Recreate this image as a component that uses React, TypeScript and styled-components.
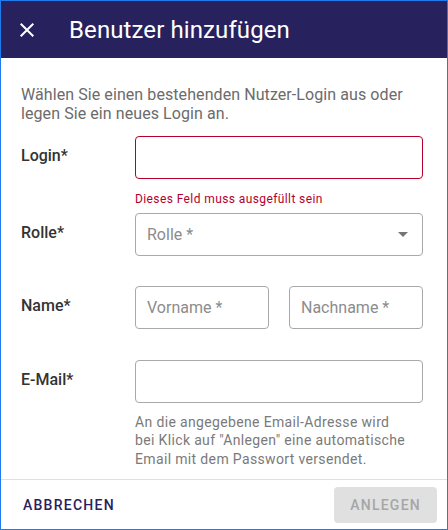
import React from "react";
import styled, { createGlobalStyle } from "styled-components";

const GlobalStyle = createGlobalStyle`
  html, body { margin: 0; padding: 0; background: #fff; }
  body { font-family: Roboto, "Noto Sans", "Liberation Sans", sans-serif; }
  * { box-sizing: border-box; }
`;

const Dialog = styled.div`
  width: 448px;
  height: 530px;
  border: 1px solid #1f7bf0;
  display: flex;
  flex-direction: column;
  background: #fff;
  overflow: hidden;
`;

const Header = styled.header`
  height: 57px;
  flex: none;
  background: #27225d;
  display: flex;
  align-items: center;
  padding-left: 14px;
  gap: 30px;
  color: #fff;
`;

const CloseButton = styled.button`
  width: 24px;
  height: 24px;
  padding: 0;
  border: 0;
  background: transparent;
  color: #fff;
  display: flex;
  cursor: pointer;
`;

const Title = styled.h1`
  margin: 0;
  font-size: 24px;
  font-weight: 400;
  line-height: 30px;
  letter-spacing: 0.1px;
`;

const Body = styled.main`
  flex: 1;
  padding: 27px 24px 0 20px;
  display: flex;
  flex-direction: column;
`;

const Intro = styled.p`
  margin: 0 0 12px;
  font-size: 16px;
  line-height: 19.3px;
  letter-spacing: 0.08px;
  color: #6b6b6b;
`;

const Row = styled.div<{ $gap: number }>`
  display: grid;
  grid-template-columns: 114px minmax(0, 1fr);
  margin-top: ${(p) => p.$gap}px;
`;

const Label = styled.label`
  height: 43px;
  display: flex;
  align-items: center;
  padding-bottom: 3px;
  font-size: 16px;
  font-weight: 500;
  color: #333;
`;

const Field = styled.div`
  display: flex;
  flex-direction: column;
  min-width: 0;
`;

const Pair = styled.div`
  display: grid;
  grid-template-columns: minmax(0, 1fr) minmax(0, 1fr);
  gap: 20px;
`;

const Box = styled.div<{ $error?: boolean }>`
  position: relative;
  height: 43px;
  min-width: 0;
  border: 1px solid ${(p) => (p.$error ? "#b5002c" : "#a9a9a9")};
  border-radius: 4px;
  display: flex;
  align-items: center;
  padding: 0 11px;
`;

const Input = styled.input`
  flex: 1;
  width: 100%;
  min-width: 0;
  border: 0;
  outline: none;
  background: transparent;
  padding: 0;
  font-family: inherit;
  font-size: 16px;
  color: #333;
  &::placeholder { color: #8c8c8c; opacity: 1; }
`;

const Placeholder = styled.span`
  flex: 1;
  font-size: 16px;
  color: #8c8c8c;
`;

const Arrow = styled.svg`
  width: 24px;
  height: 24px;
  margin-right: -4px;
  fill: #757575;
`;

const ErrorText = styled.div`
  margin-top: 10px;
  font-size: 12px;
  line-height: 20px;
  letter-spacing: 0.4px;
  color: #b5002c;
`;

const Helper = styled.div`
  margin-top: 10px;
  font-size: 14px;
  line-height: 18.5px;
  letter-spacing: 0.35px;
  color: #7a7a7a;
`;

const Footer = styled.footer`
  height: 50px;
  flex: none;
  border-top: 1px solid #e0e0e0;
  display: flex;
  align-items: center;
  justify-content: space-between;
  padding: 0 10px 0 14px;
`;

const TextButton = styled.button`
  height: 36px;
  padding: 0 8px;
  border: 0;
  background: transparent;
  font-family: inherit;
  font-size: 14px;
  font-weight: 500;
  letter-spacing: 1.25px;
  text-transform: uppercase;
  color: #27225d;
  cursor: pointer;
`;

const ContainedButton = styled.button`
  height: 36px;
  padding: 0 16px;
  border: 0;
  border-radius: 4px;
  background: #e0e0e0;
  font-family: inherit;
  font-size: 14px;
  font-weight: 500;
  letter-spacing: 1.25px;
  text-transform: uppercase;
  color: #a6a6a6;
`;

export default function App() {
  return (
    <>
      <GlobalStyle />
      <Dialog>
        <Header>
          <CloseButton aria-label="Schließen">
            <svg width="24" height="24" viewBox="0 0 24 24" fill="currentColor">
              <path d="M19 6.41L17.59 5 12 10.59 6.41 5 5 6.41 10.59 12 5 17.59 6.41 19 12 13.41 17.59 19 19 17.59 13.41 12z" />
            </svg>
          </CloseButton>
          <Title>Benutzer hinzufügen</Title>
        </Header>
        <Body>
          <Intro>
            Wählen Sie einen bestehenden Nutzer-Login aus oder legen Sie ein neues Login an.
          </Intro>
          <Row $gap={0}>
            <Label>Login*</Label>
            <Field>
              <Box $error>
                <Input />
              </Box>
              <ErrorText>Dieses Feld muss ausgefüllt sein</ErrorText>
            </Field>
          </Row>
          <Row $gap={4}>
            <Label>Rolle*</Label>
            <Field>
              <Box>
                <Placeholder>Rolle *</Placeholder>
                <Arrow viewBox="0 0 24 24">
                  <path d="M7 10l5 5 5-5z" />
                </Arrow>
              </Box>
            </Field>
          </Row>
          <Row $gap={30}>
            <Label>Name*</Label>
            <Pair>
              <Box>
                <Input placeholder="Vorname *" />
              </Box>
              <Box>
                <Input placeholder="Nachname *" />
              </Box>
            </Pair>
          </Row>
          <Row $gap={31}>
            <Label>E-Mail*</Label>
            <Field>
              <Box>
                <Input />
              </Box>
              <Helper>
                An die angegebene Email-Adresse wird
                <br />
                bei Klick auf "Anlegen" eine automatische
                <br />
                Email mit dem Passwort versendet.
              </Helper>
            </Field>
          </Row>
        </Body>
        <Footer>
          <TextButton>Abbrechen</TextButton>
          <ContainedButton disabled>Anlegen</ContainedButton>
        </Footer>
      </Dialog>
    </>
  );
}
